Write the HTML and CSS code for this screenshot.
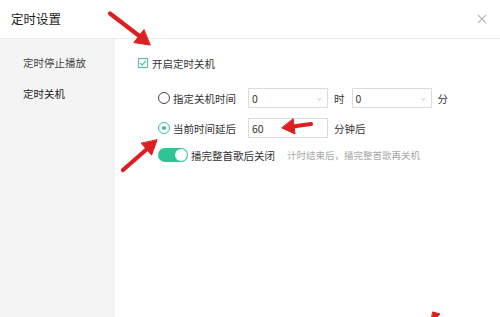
FILE: index.html
```html
<!DOCTYPE html>
<html lang="zh">
<head>
<meta charset="utf-8">
<link rel="stylesheet" href="styles.css">
</head>
<body>
<div class="dialog">
  <header class="header">
    <span class="title">定时设置</span>
    <svg class="close" width="10" height="10" viewBox="0 0 10 10"><path d="M1 1L9 9M9 1L1 9" stroke="#b8b8b8" stroke-width="1.1"/></svg>
  </header>
  <div class="main">
    <nav class="sidebar">
      <div class="nav-item">定时停止播放</div>
      <div class="nav-item active">定时关机</div>
    </nav>
    <section class="content">
      <div class="row check-row">
        <span class="checkbox"><svg width="8" height="8" viewBox="0 0 8 8"><path d="M1.2 4.2L3.2 6L6.8 1.8" fill="none" stroke="#35c192" stroke-width="1.1"/></svg></span>
        <span class="label">开启定时关机</span>
      </div>
      <div class="options">
        <div class="row opt-row">
          <span class="radio"></span>
          <span class="label opt-label">指定关机时间</span>
          <span class="input"><span>0</span><i class="chev"></i></span>
          <span class="unit">时</span>
          <span class="input"><span>0</span><i class="chev"></i></span>
          <span class="unit">分</span>
        </div>
        <div class="row opt-row">
          <span class="radio checked"></span>
          <span class="label opt-label">当前时间延后</span>
          <span class="input"><span>60</span></span>
          <span class="unit">分钟后</span>
        </div>
        <div class="row toggle-row">
          <span class="toggle"><span class="knob"></span></span>
          <span class="label">播完整首歌后关闭</span>
          <span class="hint">计时结束后，播完整首歌再关机</span>
        </div>
      </div>
    </section>
  </div>
</div>
<svg class="annotations" width="500" height="317" viewBox="0 0 500 317">
  <g fill="#dc1f22" stroke="#dc1f22" stroke-linecap="round">
    <line x1="110" y1="13.5" x2="140" y2="36.5" stroke-width="4.2"/>
    <polygon points="150,45 133.8,42.6 143.8,29.8" stroke-width="1" stroke-linejoin="round"/>
    <line x1="311" y1="124" x2="293" y2="126.5" stroke-width="4.2"/>
    <polygon points="282,128 295,134 293.2,119" stroke-width="1" stroke-linejoin="round"/>
    <line x1="123" y1="170" x2="147" y2="149" stroke-width="4.2"/>
    <polygon points="157,140 151.6,155.2 141.4,143.4" stroke-width="1" stroke-linejoin="round"/>
    <polygon points="433,312 440,314 437,317 432,317" stroke-width="1"/>
  </g>
</svg>
</body>
</html>
```
FILE: styles.css
```css
* { box-sizing: border-box; }
html, body {
  margin: 0;
  padding: 0;
  width: 500px;
  height: 317px;
  overflow: hidden;
  background: #fff;
  font-family: "Noto Sans CJK SC", "Noto Sans", sans-serif;
  color: #333;
}
.dialog {
  width: 500px;
  height: 317px;
  display: flex;
  flex-direction: column;
}
.header {
  height: 39px;
  flex: none;
  border-bottom: 1px solid #ececec;
  display: flex;
  align-items: center;
  justify-content: space-between;
  padding: 0 13px 1px 11px;
}
.title {
  font-size: 12.5px;
  color: #222;
}
.close { display: block; }
.main {
  flex: 1;
  display: flex;
}
.sidebar {
  width: 115px;
  flex: none;
  background: #f4f4f4;
  padding-top: 8px;
}
.nav-item {
  height: 31px;
  line-height: 31px;
  padding-left: 23px;
  font-size: 10.5px;
  color: #444;
}
.nav-item.active { color: #222; }
.content {
  flex: 1;
  padding: 14px 0 0 23px;
}
.row {
  display: flex;
  align-items: center;
}
.check-row { height: 20px; }
.checkbox {
  width: 10px;
  height: 10px;
  border: 1px solid #4cc59c;
  display: flex;
  align-items: center;
  justify-content: center;
  margin-right: 4px;
}
.checkbox svg { display: block; }
.label {
  font-size: 10.5px;
  color: #333;
}
.options {
  padding-left: 20px;
  padding-top: 15px;
  display: flex;
  flex-direction: column;
  gap: 10px;
}
.opt-row { height: 20px; }
.radio {
  width: 12px;
  height: 12px;
  border: 1px solid #444;
  border-radius: 50%;
  margin-right: 3px;
  display: flex;
  align-items: center;
  justify-content: center;
}
.radio.checked { border-color: #3cc39a; }
.radio.checked::after {
  content: "";
  width: 4px;
  height: 4px;
  border-radius: 50%;
  background: #35c192;
}
.opt-label { width: 75px; }
.input {
  width: 80px;
  height: 20px;
  border: 1px solid #dcdcdc;
  display: flex;
  align-items: center;
  justify-content: space-between;
  padding: 0 6px 0 3px;
  font-size: 10.5px;
  color: #333;
}
.chev {
  width: 3px;
  height: 3px;
  border-right: 1px solid #ccc;
  border-bottom: 1px solid #ccc;
  transform: rotate(45deg);
}
.unit {
  font-size: 10.5px;
  margin: 0 7px 0 6px;
}
.toggle-row {
  height: 20px;
  margin-top: -3px;
}
.toggle {
  width: 30px;
  height: 14px;
  border-radius: 7px;
  background: #2fc493;
  display: flex;
  align-items: center;
  justify-content: flex-end;
  padding-right: 1px;
  margin-right: 3px;
}
.knob {
  width: 12px;
  height: 12px;
  border-radius: 50%;
  background: #fff;
}
.hint {
  font-size: 9.5px;
  color: #a8a8a8;
  margin-left: 12px;
}
.annotations {
  position: absolute;
  left: 0;
  top: 0;
  pointer-events: none;
}
```
